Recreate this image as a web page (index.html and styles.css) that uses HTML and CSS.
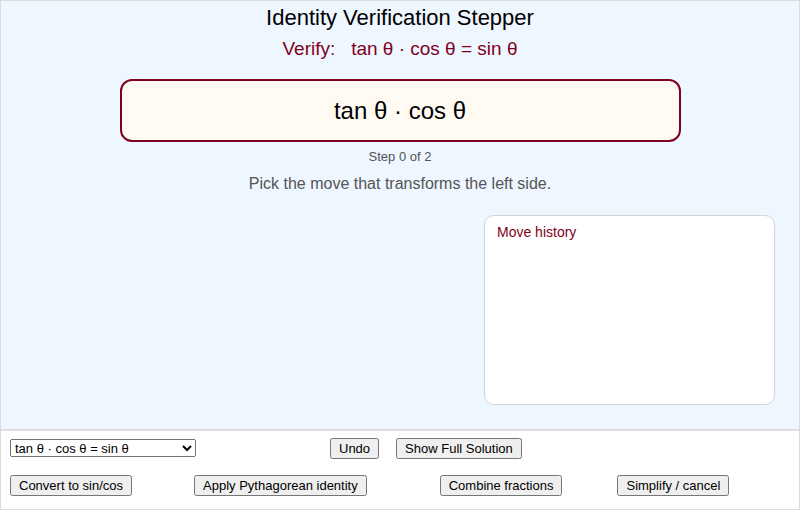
FILE: index.html
```html
<!DOCTYPE html>
<html lang="en">
<head>
  <meta charset="utf-8" />
  <meta name="viewport" content="width=device-width, initial-scale=1" />
  <title>Identity Verification Stepper</title>
  <link rel="stylesheet" href="styles.css">
</head>
<body>
  <div class="app">
    <div class="stage">
      <h1 class="title">Identity Verification Stepper</h1>
      <div class="goal">Verify:&nbsp;&nbsp; tan θ · cos θ = sin θ</div>
      <div class="expr">tan θ · cos θ</div>
      <div class="step">Step 0 of 2</div>
      <div class="hint">Pick the move that transforms the left side.</div>
      <div class="lower">
        <div class="history">
          <div class="history-title">Move history</div>
          <ol class="history-list"></ol>
        </div>
      </div>
    </div>

    <div class="controls">
      <div class="row">
        <select class="pick">
          <option>tan θ · cos θ = sin θ</option>
          <option>sec θ − cos θ = sin θ · tan θ</option>
          <option>(1 − cos² θ) / sin θ = sin θ</option>
        </select>
        <button class="undo">Undo</button>
        <button class="solve">Show Full Solution</button>
      </div>
      <div class="row moves">
        <button>Convert to sin/cos</button>
        <button class="m2">Apply Pythagorean identity</button>
        <button class="m3">Combine fractions</button>
        <button class="m4">Simplify / cancel</button>
      </div>
    </div>
  </div>
</body>
</html>
```

FILE: styles.css
```css
body { margin:0; font-family:"Liberation Sans", Arial, sans-serif; background:#fff; }
.app { width:798px; height:508px; border:1px solid #dcdcdc; display:flex; flex-direction:column; }

.stage {
  background:#eef6ff; height:428px; border-bottom:2px solid #dedede;
  display:flex; flex-direction:column; align-items:center;
}
.title { font-size:22px; font-weight:normal; margin:4px 0 0; color:#000; line-height:26px; }
.goal { font-size:19px; color:#800020; margin-top:7px; line-height:22px; }
.expr {
  width:557px; height:59px; margin-top:19px;
  background:#fffbf3; border:2px solid #800020; border-radius:12px;
  display:flex; align-items:center; justify-content:center;
  font-size:24px; color:#000;
}
.step { font-size:13px; color:#555; margin-top:7px; line-height:16px; }
.hint { font-size:16px; color:#555; margin-top:9px; line-height:19px; }

.lower { align-self:stretch; display:flex; justify-content:flex-end; padding:22px 24px 0 0; }
.history {
  width:289px; height:188px; background:#fff;
  border:1px solid #d4d4d4; border-radius:10px; padding:0;
}
.history-title { color:#800020; font-size:14px; margin:8px 0 0 12px; }
.history-list { margin:0; padding:0; }

.controls { flex:1; background:#fff; padding:6px 9px 0; }
.row { display:flex; align-items:center; height:22px; }
.moves { margin-top:15px; }
select, button { font-family:"Liberation Sans", Arial, sans-serif; font-size:13px; }
button { padding:1px 7px; }
.pick { width:186px; height:18px; }
.undo { margin-left:134px; }
.solve { margin-left:17px; }
.m2 { margin-left:62px; }
.m3 { margin-left:73px; }
.m4 { margin-left:55px; }
```
